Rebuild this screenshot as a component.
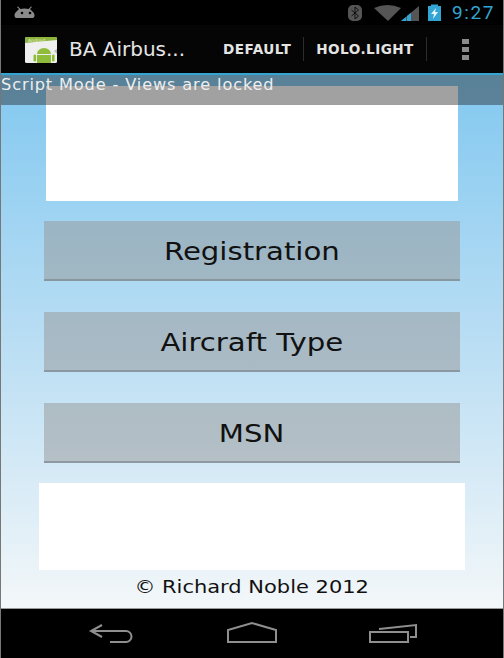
<style>
:global(body){margin:0;background:#000}
.screen{width:504px;height:658px;display:flex;flex-direction:column;overflow:hidden;position:relative;font-family:"DejaVu Sans",sans-serif;box-sizing:border-box;border-left:1px solid #777;border-right:1px solid #777}
.status{height:25px;background:#000;display:flex;align-items:center;padding:0 9px 0 13px;flex:none}
.status .right{margin-left:auto;display:flex;align-items:center}
.time{color:#33a5d5;font-family:Roboto,sans-serif;font-size:19px;margin-left:7px;letter-spacing:1.6px;width:42px;white-space:nowrap}
.bar{height:48px;background:#050505;display:flex;align-items:center;flex:none;border-bottom:2px solid #33a5d5}
.logo{margin:2px 0 0 24px;width:32px;height:26px;flex:none}
.logotext{font-size:4.500px;fill:#e8f0d8;font-family:"DejaVu Sans",sans-serif}
.title{color:#e6e6e6;font-size:20px;margin-left:12px;width:148px;white-space:nowrap}
.tab{color:#e4e4e4;font-size:13.600px;font-weight:700;white-space:nowrap;letter-spacing:.45px}
.sep{width:1px;height:24px;background:#2c2c2c;flex:none}
.tab.a{margin-left:6px;margin-right:12px}
.tab.b{margin:0 12px}
.more{margin-left:35px;display:flex;flex-direction:column;gap:3px}
.more i{display:block;width:7px;height:5px;background:#8a8a8a}
.content{flex:1;display:flex;flex-direction:column;align-items:center;background:linear-gradient(180deg,#82c8f0 0%,#bfe0f4 55%,#f3f7f9 100%);padding-top:11px;position:relative}
.ad1{width:412px;height:115px;background:#fff;flex:none}
.btn{width:416px;height:60px;flex:none;background:rgba(150,150,150,.5);border-bottom:2px solid rgba(125,135,145,.7);box-sizing:border-box;color:#111;display:flex;align-items:center;justify-content:center;margin-top:31px;padding-top:3px}
.btn span{display:inline-block;font-size:24.500px;transform:scaleX(1.19)}
.btn.first{margin-top:20px}
.ad2{width:426px;height:87px;background:#fff;margin-top:20px;flex:none}
.copy{font-size:18px;color:#111;margin-top:6px;transform:scaleX(1.165)}
.overlay{position:absolute;left:0;right:0;top:0;height:30px;background:rgba(30,30,30,.42);color:#eee;font-size:16.200px;line-height:20px;letter-spacing:.85px;white-space:nowrap}
.nav{height:50px;background:#000;border-top:1px solid #9a9a9a;box-sizing:border-box;position:relative;flex:none}
.nav svg{position:absolute;left:-1px;top:-1px}
</style>
<div class="screen">
  <div class="status">
    <svg width="26" height="14" viewBox="0 0 26 14"><path d="M2 12c-2-1-2-4 0-6l3-3 -2-2 1-.5 2.500 2.500c2-.8 6-.8 8 0l2.500-2.500 1 .5-2 2 3 3c2 2 2 5 0 6z" fill="#8a8a8a"/><circle cx="8" cy="7" r="1.300" fill="#000"/><circle cx="16" cy="7" r="1.300" fill="#000"/></svg>
    <div class="right">
      <svg width="120" height="20" viewBox="0 0 120 20"><rect x="23" y="2" width="14" height="16" rx="5" fill="#555"/><path d="M26.500 7l7 6-3.500 3V4l3.500 3-7 6" fill="none" stroke="#111" stroke-width="1"/><path d="M49 5q13.500-6 27 0L63 18z" fill="#555"/><path d="M76 18L94 3v15z" fill="#555"/><path d="M76 18l5-4v4zM82 13l4-3.300V18h-4z" fill="#33a5d5"/><rect x="103" y="3" width="13" height="15" fill="#33a5d5"/><rect x="106" y="1.500" width="7" height="2" fill="#33a5d5"/><path d="M111 5l-5 6h3l-1 5 5-7h-3z" fill="#e8f4fa"/></svg>
      <span class="time">9:27</span>
    </div>
  </div>
  <div class="bar">
    <svg class="logo" viewBox="0 0 32 26"><rect width="32" height="26" rx="1.500" fill="#efefef"/><path d="M0 1.500A1.500 1.500 0 0 1 1.500 0h29A1.500 1.500 0 0 1 32 1.500V3L0 6z" fill="#8cb43c"/><text class="logotext" x="3" y="4.500">Android</text><path d="M12 17a7 6 0 0 1 14 0z" fill="#8fbc3a"/><rect x="12" y="18" width="14" height="8" fill="#8fbc3a"/><rect x="8.500" y="17.500" width="2.600" height="7" rx="1.300" fill="#8fbc3a"/><rect x="27" y="17.500" width="2.600" height="7" rx="1.300" fill="#8fbc3a"/><path d="M32 12l-3 2 3 3z" fill="#b8b8b8"/></svg>
    <span class="title">BA Airbus...</span>
    <span class="tab a">DEFAULT</span><span class="sep"></span>
    <span class="tab b">HOLO.LIGHT</span><span class="sep"></span>
    <div class="more"><i></i><i></i><i></i></div>
  </div>
  <div class="content">
    <div class="ad1"></div>
    <div class="btn first"><span>Registration</span></div>
    <div class="btn"><span>Aircraft Type</span></div>
    <div class="btn"><span>MSN</span></div>
    <div class="ad2"></div>
    <div class="copy">© Richard Noble 2012</div>
    <div class="overlay">Script Mode - Views are locked</div>
  </div>
  <div class="nav">
    <svg width="504" height="50" viewBox="0 0 504 50" fill="none" stroke="#8f8f8f" stroke-width="2"><path d="M102 17l-11 6 11 6M91 23h35a5.500 5.500 0 0 1 0 11H110"/><path d="M228 34V22l24-7 24 7v12z"/><path d="M370 34V24h38v10zM379 21l37-4v12h-6"/></svg>
  </div>
</div>
